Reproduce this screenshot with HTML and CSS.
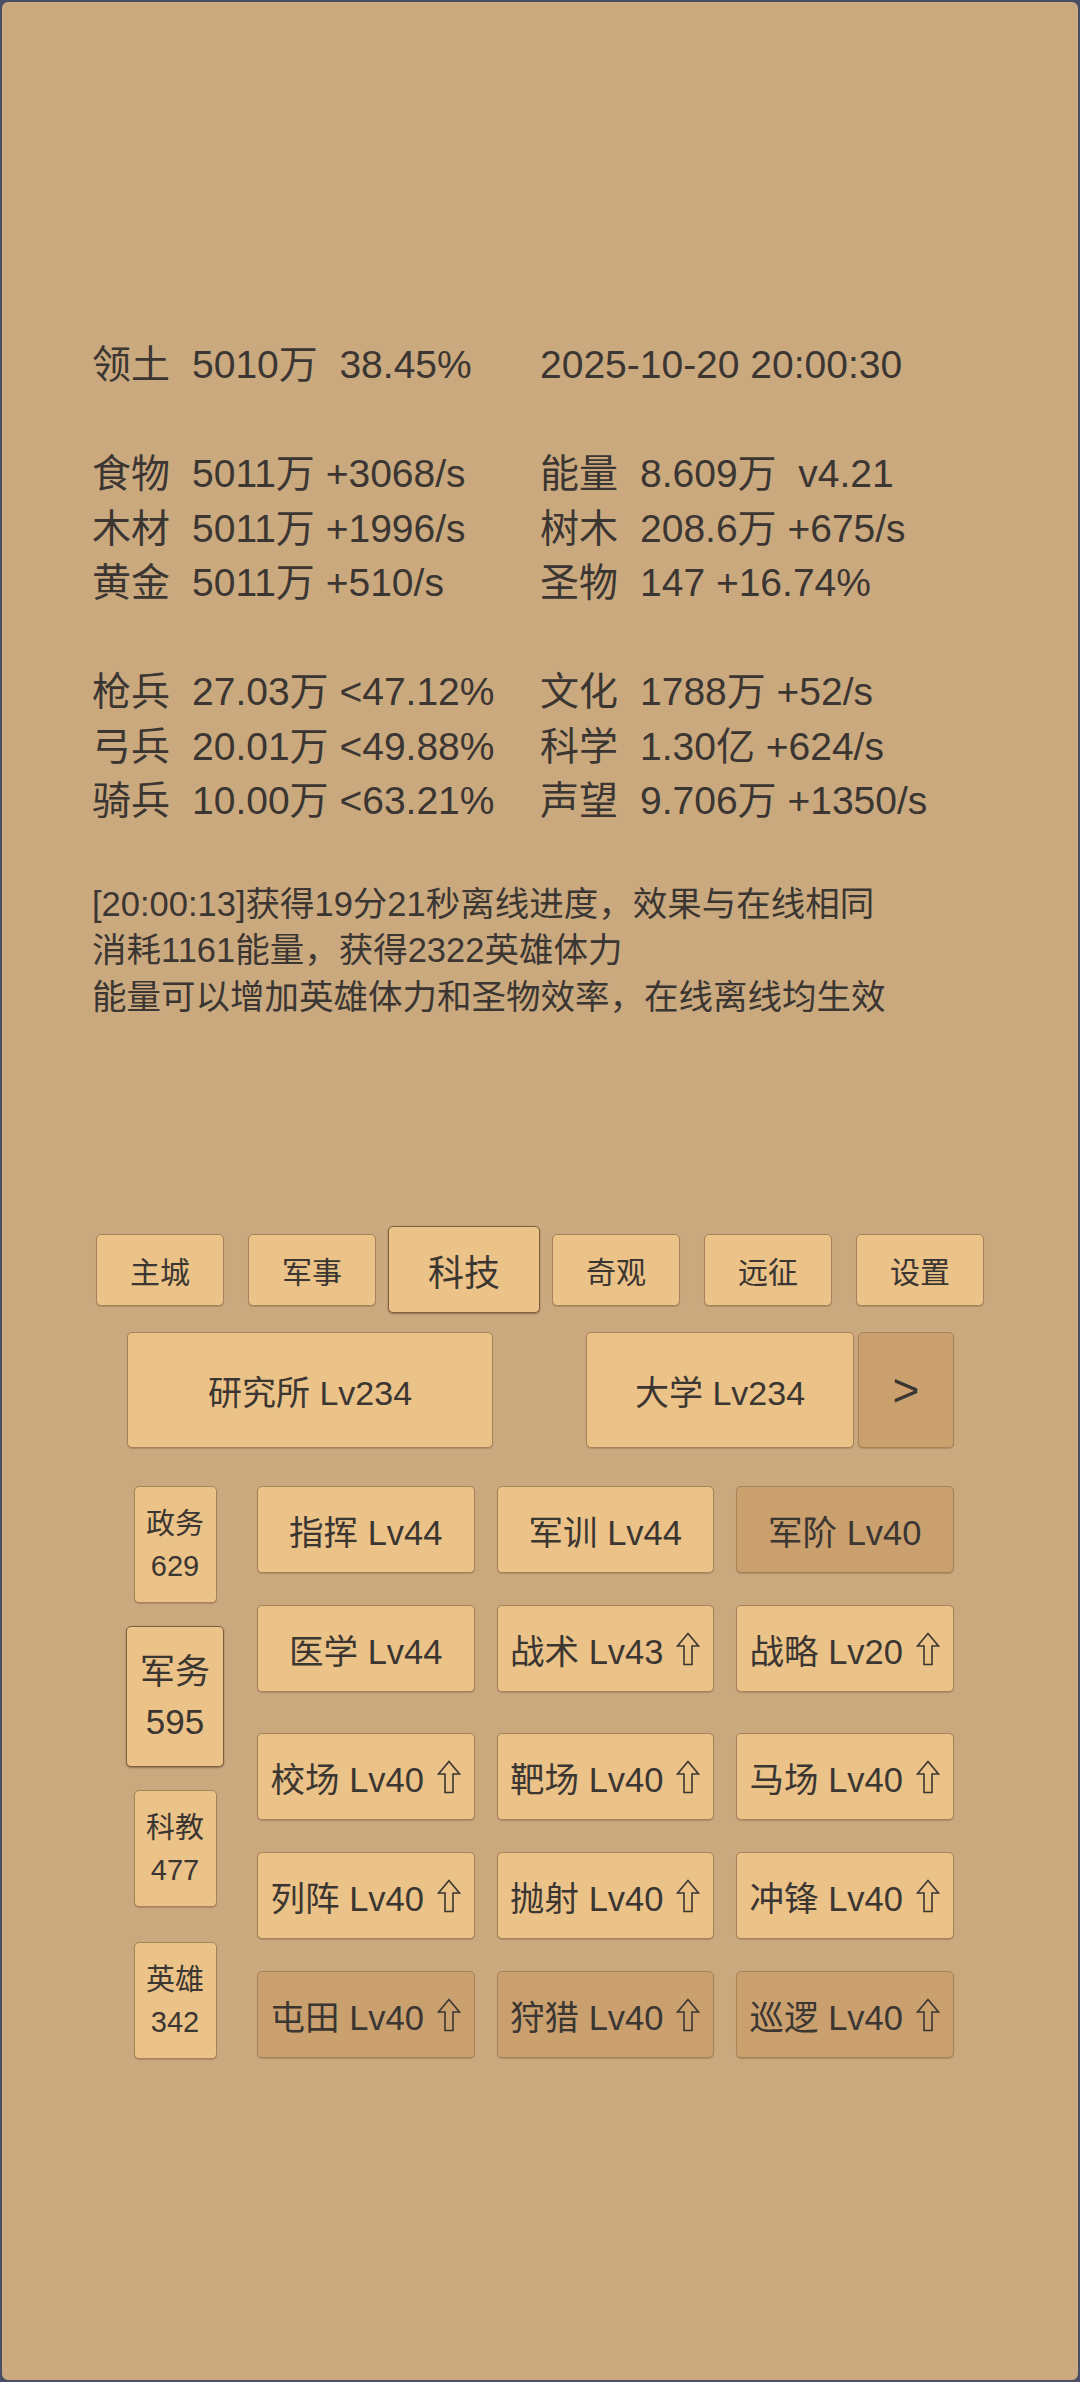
FILE: index.html
```html
<!DOCTYPE html>
<html lang="zh">
<head>
<meta charset="utf-8">
<title>科技</title>
<link rel="stylesheet" href="styles.css">
</head>
<body>
<div class="screen">
  <div class="stats">
    <div class="row"><span class="cell"><span class="lbl">领土</span>5010万  38.45%</span><span class="cell">2025-10-20 20:00:30</span></div>
    <div class="row"></div>
    <div class="row"><span class="cell"><span class="lbl">食物</span>5011万 +3068/s</span><span class="cell"><span class="lbl">能量</span>8.609万  v4.21</span></div>
    <div class="row"><span class="cell"><span class="lbl">木材</span>5011万 +1996/s</span><span class="cell"><span class="lbl">树木</span>208.6万 +675/s</span></div>
    <div class="row"><span class="cell"><span class="lbl">黄金</span>5011万 +510/s</span><span class="cell"><span class="lbl">圣物</span>147 +16.74%</span></div>
    <div class="row"></div>
    <div class="row"><span class="cell"><span class="lbl">枪兵</span>27.03万 &lt;47.12%</span><span class="cell"><span class="lbl">文化</span>1788万 +52/s</span></div>
    <div class="row"><span class="cell"><span class="lbl">弓兵</span>20.01万 &lt;49.88%</span><span class="cell"><span class="lbl">科学</span>1.30亿 +624/s</span></div>
    <div class="row"><span class="cell"><span class="lbl">骑兵</span>10.00万 &lt;63.21%</span><span class="cell"><span class="lbl">声望</span>9.706万 +1350/s</span></div>
  </div>

  <div class="log">
    <p>[20:00:13]获得19分21秒离线进度，效果与在线相同</p>
    <p>消耗1161能量，获得2322英雄体力</p>
    <p>能量可以增加英雄体力和圣物效率，在线离线均生效</p>
  </div>

  <div class="nav">
    <div class="slot"><div class="btn nbtn">主城</div></div>
    <div class="slot"><div class="btn nbtn">军事</div></div>
    <div class="slot"><div class="btn nbtn active">科技</div></div>
    <div class="slot"><div class="btn nbtn">奇观</div></div>
    <div class="slot"><div class="btn nbtn">远征</div></div>
    <div class="slot"><div class="btn nbtn">设置</div></div>
  </div>

  <div class="bld">
    <div class="btn bbtn wide">研究所 Lv234</div>
    <div class="bright">
      <div class="btn bbtn mid">大学 Lv234</div>
      <div class="btn bbtn next dark">&gt;</div>
    </div>
  </div>

  <div class="tech">
    <div class="side">
      <div class="sslot"><div class="btn sbtn"><span>政务</span><span>629</span></div></div>
      <div class="sslot"><div class="btn sbtn active"><span>军务</span><span>595</span></div></div>
      <div class="sslot"><div class="btn sbtn"><span>科教</span><span>477</span></div></div>
      <div class="sslot"><div class="btn sbtn"><span>英雄</span><span>342</span></div></div>
    </div>
    <div class="grid">
      <div class="trow">
        <div class="btn tbtn">指挥 Lv44</div>
        <div class="btn tbtn">军训 Lv44</div>
        <div class="btn tbtn dark">军阶 Lv40</div>
      </div>
      <div class="trow">
        <div class="btn tbtn">医学 Lv44</div>
        <div class="btn tbtn">战术 Lv43<svg class="up" viewBox="0 0 24 34"><path d="M12 1.5 L22.5 14 H16 V32.5 H8 V14 H1.5 Z"/></svg></div>
        <div class="btn tbtn">战略 Lv20<svg class="up" viewBox="0 0 24 34"><path d="M12 1.5 L22.5 14 H16 V32.5 H8 V14 H1.5 Z"/></svg></div>
      </div>
      <div class="trow group">
        <div class="btn tbtn">校场 Lv40<svg class="up" viewBox="0 0 24 34"><path d="M12 1.5 L22.5 14 H16 V32.5 H8 V14 H1.5 Z"/></svg></div>
        <div class="btn tbtn">靶场 Lv40<svg class="up" viewBox="0 0 24 34"><path d="M12 1.5 L22.5 14 H16 V32.5 H8 V14 H1.5 Z"/></svg></div>
        <div class="btn tbtn">马场 Lv40<svg class="up" viewBox="0 0 24 34"><path d="M12 1.5 L22.5 14 H16 V32.5 H8 V14 H1.5 Z"/></svg></div>
      </div>
      <div class="trow">
        <div class="btn tbtn">列阵 Lv40<svg class="up" viewBox="0 0 24 34"><path d="M12 1.5 L22.5 14 H16 V32.5 H8 V14 H1.5 Z"/></svg></div>
        <div class="btn tbtn">抛射 Lv40<svg class="up" viewBox="0 0 24 34"><path d="M12 1.5 L22.5 14 H16 V32.5 H8 V14 H1.5 Z"/></svg></div>
        <div class="btn tbtn">冲锋 Lv40<svg class="up" viewBox="0 0 24 34"><path d="M12 1.5 L22.5 14 H16 V32.5 H8 V14 H1.5 Z"/></svg></div>
      </div>
      <div class="trow">
        <div class="btn tbtn dark">屯田 Lv40<svg class="up" viewBox="0 0 24 34"><path d="M12 1.5 L22.5 14 H16 V32.5 H8 V14 H1.5 Z"/></svg></div>
        <div class="btn tbtn dark">狩猎 Lv40<svg class="up" viewBox="0 0 24 34"><path d="M12 1.5 L22.5 14 H16 V32.5 H8 V14 H1.5 Z"/></svg></div>
        <div class="btn tbtn dark">巡逻 Lv40<svg class="up" viewBox="0 0 24 34"><path d="M12 1.5 L22.5 14 H16 V32.5 H8 V14 H1.5 Z"/></svg></div>
      </div>
    </div>
  </div>
</div>
</body>
</html>
```

FILE: styles.css
```css
* { box-sizing: border-box; }

html, body {
  margin: 0;
  padding: 0;
  background: #4a4d66;
}

body {
  width: 1080px;
  height: 2382px;
  font-family: "Liberation Sans", "Noto Sans CJK SC", sans-serif;
  color: #3b3632;
}

.screen {
  width: 1080px;
  height: 2382px;
  background: #caa97f;
  border: 2px solid #4a4d66;
  border-radius: 8px;
  overflow: hidden;
}

/* ---------- stats ---------- */
.stats {
  padding-top: 336px;
  padding-left: 90px;
  font-size: 39px;
}

.row {
  display: grid;
  grid-template-columns: 448px 1fr;
  height: 54.5px;
  line-height: 54.5px;
}

.cell {
  white-space: pre;
}

.lbl {
  display: inline-block;
  width: 100px;
}

/* ---------- log ---------- */
.log {
  margin-top: 52px;
  padding-left: 90px;
  font-size: 34.5px;
  line-height: 46.5px;
}

.log p {
  margin: 0;
  white-space: nowrap;
}

/* ---------- buttons ---------- */
.btn {
  display: flex;
  align-items: center;
  justify-content: center;
  background: #ebc287;
  border: 1.5px solid #a6825a;
  border-radius: 5px;
  box-shadow: 0 1px 1px rgba(90, 60, 30, 0.25);
  white-space: nowrap;
}

.btn.dark {
  background: #c9a06e;
}

.btn.active {
  border-color: #7d5f3e;
  box-shadow: 0 1px 2px rgba(70, 45, 20, 0.45);
}

/* ---------- nav ---------- */
.nav {
  margin-top: 206px;
  height: 87px;
  display: flex;
  justify-content: center;
  align-items: center;
}

.slot {
  width: 152px;
  display: flex;
  justify-content: center;
  align-items: center;
}

.nbtn {
  width: 128px;
  height: 72px;
  font-size: 30px;
}

.nbtn.active {
  width: 152px;
  height: 87px;
  font-size: 36px;
}

/* ---------- building row ---------- */
.bld {
  margin-top: 19px;
  padding-left: 125px;
  display: flex;
  height: 116px;
}

.bbtn {
  height: 116px;
  font-size: 34px;
}

.bbtn.wide {
  width: 366px;
}

.bright {
  margin-left: 93px;
  display: flex;
  gap: 4px;
}

.bbtn.mid {
  width: 268px;
}

.bbtn.next {
  width: 96px;
  font-size: 46px;
}

/* ---------- tech section ---------- */
.tech {
  margin-top: 20.5px;
  padding-left: 118px;
  display: flex;
  gap: 27px;
}

.side {
  width: 110px;
  display: flex;
  flex-direction: column;
}

.sslot {
  height: 152px;
  display: flex;
  align-items: center;
  justify-content: center;
}

.sbtn {
  width: 83px;
  height: 117px;
  flex-direction: column;
  font-size: 29px;
  line-height: 42px;
}

.sbtn.active {
  width: 98px;
  height: 141px;
  font-size: 35px;
  line-height: 50px;
}

.grid {
  margin-top: 17.5px;
  width: 697px;
  display: flex;
  flex-direction: column;
  gap: 32px;
}

.trow {
  display: grid;
  grid-template-columns: repeat(3, 217.5px);
  column-gap: 22px;
}

.trow.group {
  margin-top: 9px;
}

.tbtn {
  height: 87px;
  font-size: 34.5px;
}

.up {
  width: 24px;
  height: 34px;
  margin-left: 13px;
  fill: none;
  stroke: #3b3632;
  stroke-width: 1.6;
  stroke-linejoin: miter;
}
```
